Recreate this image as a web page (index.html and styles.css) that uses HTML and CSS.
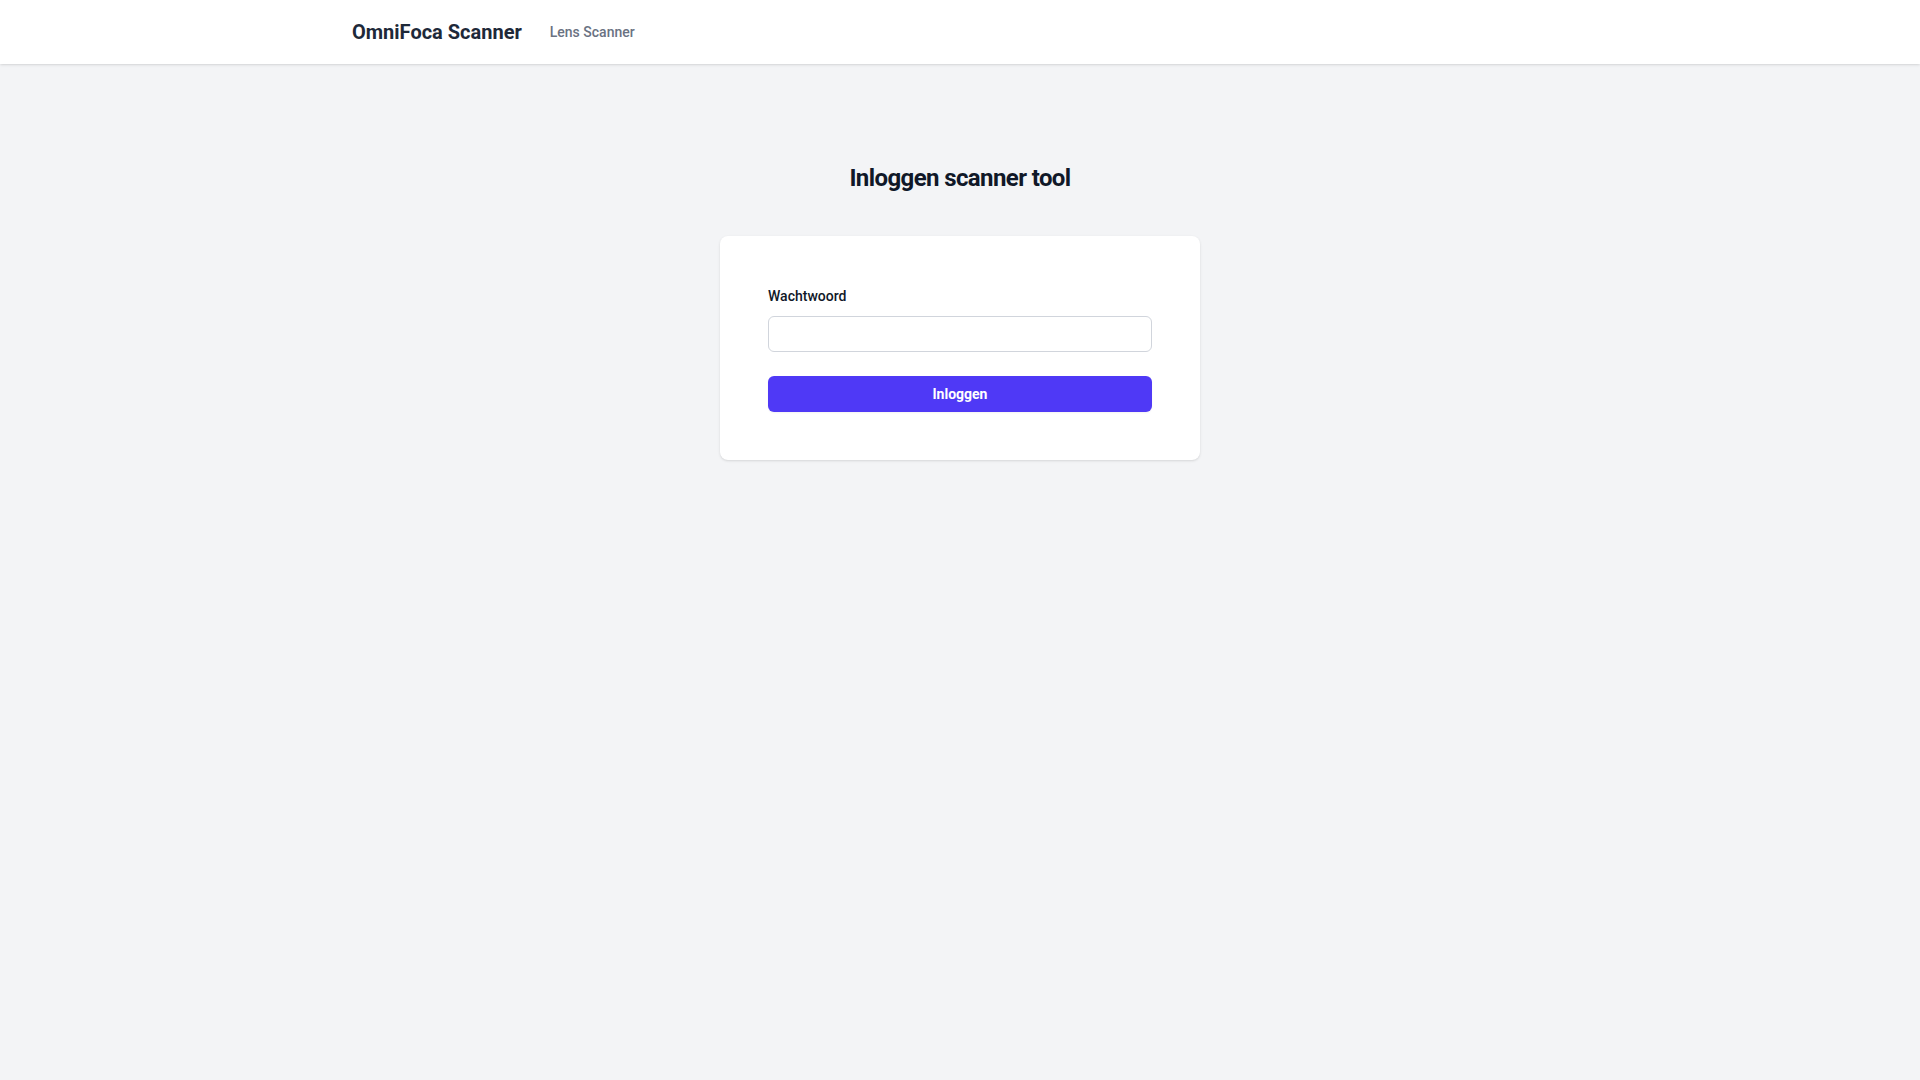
FILE: index.html
```html
<!DOCTYPE html>
<html lang="nl">

<head>
  <meta charset="UTF-8">
  <meta name="viewport" content="width=device-width, initial-scale=1.0">
  <title>Inloggen scanner tool</title>
  <link rel="stylesheet" href="styles.css">
</head>

<body>
  <nav class="topbar">
    <div class="topbar-inner">
      <span class="brand">OmniFoca Scanner</span>
      <a class="nav-link" href="#">Lens Scanner</a>
    </div>
  </nav>

  <main class="page">
    <h1 class="page-title">Inloggen scanner tool</h1>
    <form class="login-card" action="#">
      <label class="field-label" for="password">Wachtwoord</label>
      <input class="field-input" type="password" id="password" name="password">
      <button class="btn-primary" type="submit">Inloggen</button>
    </form>
  </main>
</body>

</html>
```

FILE: styles.css
```css
* {
  box-sizing: border-box;
}

html,
body {
  height: 100%;
}

body {
  margin: 0;
  font-family: Roboto, "Liberation Sans", Arial, sans-serif;
  background: #f3f4f6;
  color: #101828;
}

.topbar {
  height: 64px;
  background: #fff;
  box-shadow: 0 1px 3px rgba(0, 0, 0, 0.1), 0 1px 2px -1px rgba(0, 0, 0, 0.1);
}

.topbar-inner {
  display: flex;
  align-items: center;
  height: 100%;
  max-width: 1280px;
  margin: 0 auto;
  padding: 0 32px;
}

.brand {
  font-size: 20px;
  line-height: 28px;
  font-weight: 700;
  color: #1e2939;
}

.nav-link {
  margin-left: 28px;
  font-size: 14px;
  line-height: 20px;
  font-weight: 500;
  color: #6a7282;
  text-decoration: none;
}

.page {
  display: flex;
  flex-direction: column;
  align-items: center;
  padding-top: 98px;
}

.page-title {
  margin: 0;
  font-size: 24px;
  line-height: 32px;
  font-weight: 700;
  letter-spacing: -0.025em;
  color: #101828;
}

.login-card {
  display: flex;
  flex-direction: column;
  width: 480px;
  margin-top: 42px;
  padding: 50px 48px 48px;
  background: #fff;
  border-radius: 8px;
  box-shadow: 0 1px 3px rgba(0, 0, 0, 0.1), 0 1px 2px -1px rgba(0, 0, 0, 0.1);
}

.field-label {
  font-size: 14px;
  line-height: 20px;
  font-weight: 500;
  color: #101828;
}

.field-input {
  height: 36px;
  margin-top: 10px;
  padding: 0 12px;
  font-size: 14px;
  font-family: inherit;
  background: #fff;
  border: 1px solid #d1d5dc;
  border-radius: 6px;
  outline: none;
}

.btn-primary {
  height: 36px;
  margin-top: 24px;
  font-family: inherit;
  font-size: 14px;
  font-weight: 700;
  color: #fff;
  background: #4f39f6;
  border: none;
  border-radius: 6px;
  box-shadow: 0 1px 2px rgba(0, 0, 0, 0.05);
  cursor: pointer;
}
```
